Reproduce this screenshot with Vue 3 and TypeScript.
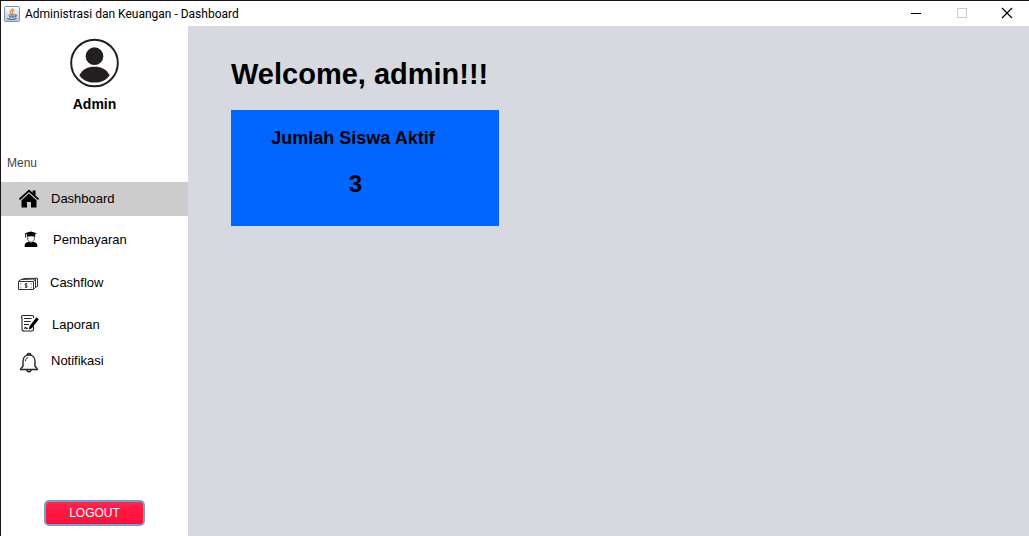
<script setup lang="ts">
import { ref } from 'vue'

interface MenuItem {
  id: string
  label: string
}

const items: MenuItem[] = [
  { id: 'dashboard', label: 'Dashboard' },
  { id: 'pembayaran', label: 'Pembayaran' },
  { id: 'cashflow', label: 'Cashflow' },
  { id: 'laporan', label: 'Laporan' },
  { id: 'notifikasi', label: 'Notifikasi' },
]

const active = ref<string>('dashboard')
const activeStudents = 3
</script>

<template>
  <div class="window">
    <header class="titlebar">
      <svg class="app-icon" viewBox="0 0 16 16" aria-hidden="true">
        <defs>
          <linearGradient id="tile" x1="0" y1="0" x2="0" y2="1">
            <stop offset="0" stop-color="#fdfdfe" />
            <stop offset="1" stop-color="#b9c9d9" />
          </linearGradient>
        </defs>
        <rect x="0.5" y="0.5" width="15" height="15" rx="1" fill="url(#tile)" stroke="#8093a6" />
        <path d="M8.6 2.2C9.4 4 5.6 4.6 6.4 6.4c.3.8 1 1.200 1 2M10.300 4.200C8.400 5 8 5.800 8.600 6.600c.4.6.2 1.100-.2 1.600" fill="none" stroke="#ec8b2c" stroke-width="1.300" />
        <path d="M4.500 9h6M5 10.800h5.200M10.800 9c2.200-.5 2 1.600-.3 2M3 12.600c2 1.200 7.500 1.200 9.500 0" fill="none" stroke="#3f6d9b" stroke-width="1.200" />
      </svg>
      <span class="title">Administrasi dan Keuangan - Dashboard</span>
      <div class="controls">
        <button type="button" class="control" aria-label="Minimize">
          <svg viewBox="0 0 10 10" shape-rendering="crispEdges"><path d="M0 5.500h10" stroke="#000" /></svg>
        </button>
        <button type="button" class="control" aria-label="Maximize" disabled>
          <svg viewBox="0 0 10 10"><rect x="0.5" y="0.5" width="9" height="9" fill="none" stroke="#ccc" /></svg>
        </button>
        <button type="button" class="control" aria-label="Close">
          <svg viewBox="0 0 10 10"><path d="M0 0l10 10M10 0L0 10" stroke="#000" stroke-width="1.200" /></svg>
        </button>
      </div>
    </header>

    <div class="body">
      <aside class="sidebar">
        <div class="profile">
          <svg class="avatar" viewBox="0 0 50 50" aria-hidden="true">
            <circle cx="25" cy="25" r="23.800" fill="none" stroke="#231f20" stroke-width="2" />
            <circle cx="25" cy="18" r="9" fill="#231f20" />
            <path d="M9.500 37.500C13 31 18 28.700 25 28.700S37 31 40.500 37.500C37 42.500 32 45 25 45S13 42.500 9.500 37.500z" fill="#231f20" />
          </svg>
          <span class="name">Admin</span>
        </div>

        <p class="menu-title">Menu</p>
        <nav class="menu">
          <button
            v-for="item in items"
            :key="item.id"
            type="button"
            class="item"
            :class="[item.id, { active: item.id === active }]"
            @click="active = item.id"
          >
            <svg v-if="item.id === 'dashboard'" class="icon" viewBox="0 0 24 24" aria-hidden="true">
              <path d="M12 2.500L1.800 11.700l1.300 1.300L12 5l8.900 8 1.300-1.300-3.700-3.300V3.500h-2.800v2.300z" />
              <path d="M12 6.500l-7.500 6.700V20.500h5.500v-5.500h4v5.500h5.500v-7.300z" />
            </svg>
            <svg v-else-if="item.id === 'pembayaran'" class="icon" viewBox="0 0 24 24" aria-hidden="true">
              <path d="M12 3.500l6 1.700L12 7.500 5.500 5.200z" />
              <path d="M7.800 5.800L12 7.300l4.200-1.500v3c-2.500-.8-5.900-.8-8.400 0zM6.200 5.500h.8v4h-.8z" />
              <path d="M8.500 8.500c0 4 1.300 5.600 3.500 5.600s3.500-1.600 3.500-5.600" fill="none" stroke="#555" stroke-width="1" />
              <path d="M5.700 19v-2c0-2 2.300-2.700 4.300-3.200l2 1 2-1c2 .5 4.300 1.200 4.300 3.200v2z" />
            </svg>
            <svg v-else-if="item.id === 'cashflow'" class="icon" viewBox="0 0 24 24" aria-hidden="true">
              <g fill="none" stroke="#333" stroke-width="1">
                <path d="M2.500 10.500h15v8h-15z" />
                <path d="M2.500 10.300l2.500-1.800 14.500-.5v8.500l-2 1.500M5 8.500l4-1 12.500-.3v8.300l-2 .8M17.500 10.500l2-2.500" />
                <path d="M4.500 14v-1.500H6M14 12.500h1.500V14M4.500 15.500V17H6M14 17h1.500v-1.500" stroke="#999" stroke-width=".7" />
                <path d="M11.300 12.800c-1.300-.8-2.600-.1-2.200.9.300.8 1.900.7 2.100 1.600.2 1.100-1.300 1.500-2.400.7M10.100 12v5" />
              </g>
            </svg>
            <svg v-else-if="item.id === 'laporan'" class="icon" viewBox="0 0 24 24" aria-hidden="true">
              <g fill="none" stroke="#222" stroke-width="1.100">
                <path d="M15.500 5V3.800c0-1-.5-1.300-1.300-1.300H5c-1.200 0-1.700.7-1.500 2l.5 1v10.500c0 1.300.6 2 2 2h8c1.200 0 1.500-.8 1.500-1.800v-3" />
                <path d="M6 5.500h7.500M6 8.500h6.500M6 11.500h5M6 15.500l1.500-1 1 1 1.500-.5" />
              </g>
              <path d="M18.400 4.300l2.400 2-7 8.900-2.900 1.300.6-3.300z" />
            </svg>
            <svg v-else class="icon" viewBox="0 0 24 24" aria-hidden="true">
              <g fill="none" stroke="#222" stroke-width="1.400">
                <path d="M10.300 6.200c-.5-2.500 3.900-2.500 3.400 0M6 17.500V12c0-3.500 2.500-6 6-6s6 2.500 6 6v5.500M6 17c-.5 1.500-2.300 2-2.300 3.500h16.600c0-1.500-1.800-2-2.300-3.500M10 21c0 2.300 4 2.300 4 0" />
                <path d="M8.500 12c0-1.800 1-3 2.500-3.500" stroke-width="1" />
              </g>
            </svg>
            <span>{{ item.label }}</span>
          </button>
        </nav>

        <button type="button" class="logout">LOGOUT</button>
      </aside>

      <main class="content">
        <h1>Welcome, admin!!!</h1>
        <section class="card">
          <h2>Jumlah Siswa Aktif</h2>
          <p>{{ activeStudents }}</p>
        </section>
      </main>
    </div>
  </div>
</template>

<style>
body {
  margin: 0;
}
</style>

<style scoped>
.window {
  box-sizing: border-box;
  min-height: 100vh;
  display: flex;
  flex-direction: column;
  border-top: 1px solid #17151a;
  border-left: 1px solid #17151a;
  background: #fff;
  color: #000;
  font-family: "Liberation Sans", Arial, sans-serif;
  font-size: 12px;
}

button {
  font: inherit;
  color: inherit;
  border: 0;
  background: none;
  padding: 0;
}

.titlebar {
  display: flex;
  align-items: center;
  height: 25px;
  padding-left: 3px;
}

.app-icon {
  width: 16px;
  height: 16px;
}

.title {
  margin-left: 5px;
  font-family: Roboto, "Open Sans", sans-serif;
  font-size: 12px;
  line-height: 16px;
}

.controls {
  display: flex;
  align-self: flex-start;
  margin-left: auto;
}

.control {
  display: flex;
  align-items: center;
  justify-content: center;
  width: 46px;
  height: 24px;
}

.control:last-child {
  width: 44px;
}

.control svg {
  width: 10px;
  height: 10px;
  overflow: visible;
}

.body {
  flex: 1;
  display: flex;
}

.sidebar {
  flex: none;
  width: 187px;
  display: flex;
  flex-direction: column;
}

.profile {
  display: flex;
  flex-direction: column;
  align-items: center;
  padding-top: 12px;
}

.avatar {
  width: 49px;
  height: 50px;
}

.name {
  margin-top: 8px;
  font-size: 14px;
  font-weight: bold;
  line-height: 16px;
}

.menu-title {
  margin: 43px 0 11px;
  padding-left: 6px;
  line-height: 16px;
  color: #444;
}

.menu {
  display: flex;
  flex-direction: column;
}

.item {
  display: flex;
  align-items: center;
  gap: 10px;
  height: 34px;
  padding-left: 16px;
  font-size: 13px;
  line-height: 16px;
  text-align: left;
}

.item.active {
  background: #ccc;
}

.item.pembayaran {
  margin-top: 7px;
  padding-left: 18px;
}

.item.cashflow {
  margin-top: 9px;
  padding-left: 15px;
}

.item.laporan {
  margin-top: 8px;
  padding-left: 17px;
}

.item.notifikasi {
  margin-top: 2px;
}

.icon {
  flex: none;
  width: 24px;
  height: 24px;
}

.logout {
  align-self: center;
  box-sizing: border-box;
  width: 101px;
  height: 26px;
  margin-top: auto;
  margin-bottom: 10px;
  border: 2px solid #6ea2cf;
  border-radius: 5px;
  background: linear-gradient(#ff2850, #ff1440 45%, #ff1440 75%, #f0123c);
  color: #fff;
}

.content {
  flex: 1;
  padding: 30px 43px;
  background: #d6d9e0;
}

h1 {
  margin: 0;
  font-size: 29px;
  line-height: 36px;
}

.card {
  box-sizing: border-box;
  width: 268px;
  margin-top: 18px;
  padding: 18px 24px 28px 0;
  background: #06f;
  text-align: center;
}

h2 {
  margin: 0;
  font-size: 18px;
  line-height: 20px;
}

.card p {
  margin: 22px 0 0;
  padding-left: 5px;
  font-size: 24px;
  font-weight: bold;
  line-height: 28px;
}
</style>
